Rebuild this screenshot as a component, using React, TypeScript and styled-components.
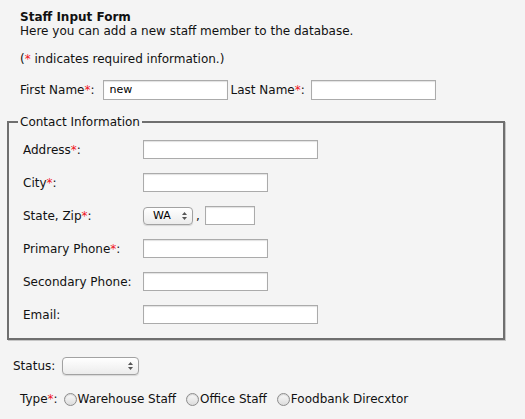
import React from "react";
import styled, { createGlobalStyle } from "styled-components";

const Global = createGlobalStyle`
  html, body { margin: 0; padding: 0; background: #f4f4f4; }
  body {
    font-family: "DejaVu Sans", Verdana, sans-serif;
    font-size: 12px;
    line-height: 14px;
    color: #111;
  }
  * { box-sizing: border-box; }
`;

const Page = styled.div`
  padding: 10px 0 0 7px;
  width: 525px;
`;

const Header = styled.div`
  margin-left: 13px;
`;

const Title = styled.div`
  font-weight: bold;
`;

const Note = styled.p`
  margin: 14px 0 0;
`;

const Req = styled.span`
  color: #f0141e;
`;

const NameRow = styled.div`
  display: flex;
  align-items: center;
  height: 20px;
  margin: 14px 0 0 13px;
`;

const Label = styled.span<{ $gap?: number; $lead?: number }>`
  white-space: nowrap;
  margin-right: ${(p) => p.$gap ?? 6}px;
  margin-left: ${(p) => p.$lead ?? 0}px;
`;

const TextInput = styled.div<{ $w: number; $h?: number }>`
  width: ${(p) => p.$w}px;
  height: ${(p) => p.$h ?? 19}px;
  background: #fff;
  border: 1px solid #ababab;
  box-shadow: inset 0 1px 1px rgba(0, 0, 0, 0.12);
  font-size: 11px;
  line-height: ${(p) => (p.$h ?? 19) - 2}px;
  padding-left: 6px;
  color: #000;
`;

const Fieldset = styled.fieldset`
  width: 498px;
  margin: 15px 0 0 0;
  padding: 11px 0 14px 14px;
  border: 2px solid #6f6f6f;
  box-shadow: 1px 1px 0 #c6c6c6;
`;

const Legend = styled.legend`
  margin-left: -5px;
  padding: 0 2px;
  line-height: 14px;
`;

const Grid = styled.div`
  display: grid;
  grid-template-columns: 120px auto;
  grid-auto-rows: 19px;
  row-gap: 14px;
  align-items: center;
`;

const Cell = styled.div`
  display: flex;
  align-items: center;
`;

const Select = styled.div<{ $w: number }>`
  width: ${(p) => p.$w}px;
  height: 18px;
  display: inline-flex;
  align-items: center;
  justify-content: space-between;
  padding: 0 5px 0 9px;
  border: 1px solid #a2a2a2;
  border-radius: 4px;
  background: linear-gradient(#ffffff, #ececec);
  box-shadow: 0 1px 1px rgba(0, 0, 0, 0.12);
  font-size: 11px;
  color: #000;
`;

const Comma = styled.span`
  margin: 0 5px 0 3px;
`;

const StatusRow = styled.div`
  display: flex;
  align-items: center;
  margin: 17px 0 0 6px;
`;

const TypeRow = styled.div`
  display: flex;
  align-items: center;
  height: 18px;
  margin: 15px 0 0 13px;
`;

const Option = styled.label`
  display: inline-flex;
  align-items: center;
  margin-right: 10px;
`;

const Radio = styled.span`
  width: 13px;
  height: 13px;
  border-radius: 50%;
  border: 1px solid #8c8c8c;
  background: linear-gradient(#fafafa, #dcdcdc);
  box-shadow: inset 0 1px 1px rgba(0, 0, 0, 0.15);
  margin-right: 1px;
  flex: none;
`;

const Arrows = () => (
  <svg width="5" height="8" viewBox="0 0 5 8">
    <path d="M2.5 0 L5 3 L0 3 Z" fill="#555" />
    <path d="M2.5 8 L5 5 L0 5 Z" fill="#555" />
  </svg>
);

const rows: { label: string; req: boolean; w: number }[] = [
  { label: "Address", req: true, w: 175 },
  { label: "City", req: true, w: 125 },
];
const rows2: { label: string; req: boolean; w: number }[] = [
  { label: "Primary Phone", req: true, w: 125 },
  { label: "Secondary Phone", req: false, w: 125 },
  { label: "Email", req: false, w: 175 },
];

const FieldLabel = ({ label, req }: { label: string; req: boolean }) => (
  <span>
    {label}
    {req && <Req>*</Req>}:
  </span>
);

export default function App() {
  return (
    <>
      <Global />
      <Page>
        <Header>
          <Title>Staff Input Form</Title>
          <div>Here you can add a new staff member to the database.</div>
          <Note>
            (<Req>*</Req> indicates required information.)
          </Note>
        </Header>
        <NameRow>
          <Label $gap={8}>
            First Name<Req>*</Req>:
          </Label>
          <TextInput $w={125} $h={20}>new</TextInput>
          <Label $gap={6} $lead={3}>
            Last Name<Req>*</Req>:
          </Label>
          <TextInput $w={125} $h={20} />
        </NameRow>
        <Fieldset>
          <Legend>Contact Information</Legend>
          <Grid>
            {rows.map((r) => (
              <React.Fragment key={r.label}>
                <FieldLabel label={r.label} req={r.req} />
                <Cell>
                  <TextInput $w={r.w} />
                </Cell>
              </React.Fragment>
            ))}
            <FieldLabel label="State, Zip" req />
            <Cell>
              <Select $w={50}>
                WA <Arrows />
              </Select>
              <Comma>,</Comma>
              <TextInput $w={50} />
            </Cell>
            {rows2.map((r) => (
              <React.Fragment key={r.label}>
                <FieldLabel label={r.label} req={r.req} />
                <Cell>
                  <TextInput $w={r.w} />
                </Cell>
              </React.Fragment>
            ))}
          </Grid>
        </Fieldset>
        <StatusRow>
          <Label $gap={7}>Status:</Label>
          <Select $w={77}>
            <span />
            <Arrows />
          </Select>
        </StatusRow>
        <TypeRow>
          <Label $gap={6}>
            Type<Req>*</Req>:
          </Label>
          <Option>
            <Radio />
            Warehouse Staff
          </Option>
          <Option>
            <Radio />
            Office Staff
          </Option>
          <Option>
            <Radio />
            Foodbank Direcxtor
          </Option>
        </TypeRow>
      </Page>
    </>
  );
}
